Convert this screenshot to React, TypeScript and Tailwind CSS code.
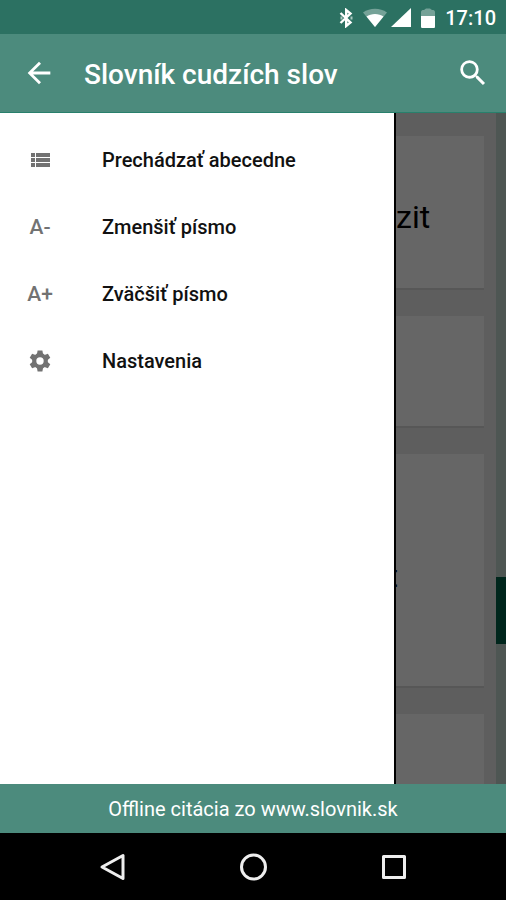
import type { ReactNode } from "react";
import { MdArrowBack, MdSearch } from "react-icons/md";

type MenuItem = {
  label: string;
  icon: ReactNode;
};

function ListIcon() {
  return (
    <svg className="h-4 w-5" viewBox="0 0 20 16" fill="currentColor">
      <path d="M1 1h4v4H1zM6 1h14v4H6zM1 6h4v4H1zM6 6h14v4H6zM1 11h4v4H1zM6 11h14v4H6z" />
    </svg>
  );
}

function GearIcon() {
  return (
    <svg className="h-6 w-6" viewBox="0 0 24 24">
      <g fill="currentColor">
        <path d="M9.6 1.5h4.8l.9 5H8.7zM9.6 22.500h4.800l.9-5H8.700z" />
        <path d="M9.6 1.5h4.8l.9 5H8.7zM9.6 22.5h4.8l.9-5H8.7z" transform="rotate(60 12 12)" />
        <path d="M9.6 1.5h4.8l.9 5H8.7zM9.6 22.5h4.8l.9-5H8.7z" transform="rotate(120 12 12)" />
      </g>
      <circle cx="12" cy="12" r="5.8" fill="none" stroke="currentColor" strokeWidth="4.2" />
    </svg>
  );
}

const menuItems: MenuItem[] = [
  { label: "Prechádzať abecedne", icon: <ListIcon /> },
  { label: "Zmenšiť písmo", icon: "A-" },
  { label: "Zväčšiť písmo", icon: "A+" },
  { label: "Nastavenia", icon: <GearIcon /> },
];

function StatusBar() {
  return (
    <div className="flex h-[34px] items-center justify-end bg-[#2c7162] pt-0.5 pr-2.5 text-white">
      {/* Bluetooth */}
      <svg className="h-5 w-3.5" viewBox="0 0 14 20" fill="none" stroke="currentColor" strokeWidth="2.4">
        <path d="M1.5 5l10 9.5L7.2 18V2l4.3 3.5L1.5 15" />
        <path d="M2.500 8.500v3M12.500 8.500v3" opacity="0.6" strokeWidth="2" />
      </svg>
      {/* Wi-Fi */}
      <svg className="ml-2.5 h-5 w-6" viewBox="0 0 24 20" fill="currentColor">
        <path d="M0 4.5C7-.5 17-.5 24 4.5L12 19z" opacity="0.35" />
        <path d="M3.500 8.500C8 5 16 5 20.500 8.500L12 19z" />
      </svg>
      {/* Signal */}
      <svg className="ml-1 h-5 w-5" viewBox="0 0 20 20" fill="currentColor">
        <path d="M20 0v19H0z" />
      </svg>
      {/* Battery */}
      <svg className="ml-2.5 h-5 w-3.5" viewBox="0 0 14 20" fill="currentColor">
        <path d="M0 8V4.5C0 2.5 1 2 3 2l2-1.500h4L11 2c2 0 3 .5 3 2.500V8z" opacity="0.35" />
        <path d="M0 8h14v10.500c0 1-.5 1.500-1.500 1.500h-11C.5 20 0 19.500 0 18.500z" />
      </svg>
      <span className="ml-2.5 text-[20px] leading-6 font-medium">17:10</span>
    </div>
  );
}

function AppBar() {
  return (
    <header className="flex h-[79px] items-center border-b border-[#28806c] bg-[#4c8b7d] text-white">
      <button type="button" aria-label="Späť" className="ml-[22px]">
        <MdArrowBack size={34} />
      </button>
      <h1 className="ml-7 flex-1 pt-1 text-[28px] leading-8 font-medium">
        Slovník cudzích slov
      </h1>
      <button type="button" aria-label="Hľadať" className="mr-4">
        <MdSearch size={34} />
      </button>
    </header>
  );
}

function Drawer() {
  return (
    <nav className="border-r-2 border-black bg-white pt-[13px]">
      <ul>
        {menuItems.map((item) => (
          <li key={item.label}>
            <button
              type="button"
              className="flex h-[67px] w-full items-center text-left text-[20px] leading-6 font-medium text-[#111111]"
            >
              <span className="ml-4 flex w-12 justify-center text-[21px] text-[#727272]">
                {item.icon}
              </span>
              <span className="ml-[38px]">{item.label}</span>
            </button>
          </li>
        ))}
      </ul>
    </nav>
  );
}

function Results() {
  return (
    <section className="flex bg-[#5e5e5e]">
      <div className="flex flex-1 flex-col gap-[26px] pt-[23px] text-[32px] leading-10 text-black">
        <div className="h-[154px] border-b-2 border-[#575757] bg-[#666666] pt-[61px]">
          zit
        </div>
        <div className="h-[112px] border-b-2 border-[#575757] bg-[#666666]" />
        <div className="h-[234px] border-b-2 border-[#575757] bg-[#666666] pt-[102px]">
          <span className="flex w-0.5 justify-end overflow-hidden">t</span>
        </div>
        <div className="flex-1 bg-[#666666]" />
      </div>
      {/* Alphabet scroller */}
      <div className="ml-3 w-2.5 bg-[#4e5653] pt-[464px]">
        <div className="h-[67px] bg-[#00261c]" />
      </div>
    </section>
  );
}

function SystemNav() {
  return (
    <div className="flex h-[67px] items-center justify-center gap-[108px] bg-black text-[#eeeeee]">
      <button type="button" aria-label="Naspäť">
        <svg className="h-8 w-8" viewBox="0 0 32 32" fill="none" stroke="currentColor" strokeWidth="3" strokeLinejoin="round">
          <path d="M26 4.5v23L5 16z" />
        </svg>
      </button>
      <button type="button" aria-label="Domov">
        <svg className="h-8 w-8" viewBox="0 0 32 32" fill="none" stroke="currentColor" strokeWidth="3">
          <circle cx="16.5" cy="16" r="12" />
        </svg>
      </button>
      <button type="button" aria-label="Prehľad">
        <svg className="h-8 w-8" viewBox="0 0 32 32" fill="none" stroke="currentColor" strokeWidth="3" strokeLinejoin="round">
          <path d="M6.5 5.5h21v21h-21z" />
        </svg>
      </button>
    </div>
  );
}

export default function App() {
  return (
    <div className="flex min-h-screen flex-col font-['Roboto',sans-serif]">
      <StatusBar />
      <AppBar />
      <main className="grid flex-1 grid-cols-[18fr_5fr]">
        <Drawer />
        <Results />
      </main>
      <footer className="flex h-[49px] items-center justify-center bg-[#4c8b7d] text-[20px] leading-6 text-white">
        Offline citácia zo www.slovnik.sk
      </footer>
      <SystemNav />
    </div>
  );
}
